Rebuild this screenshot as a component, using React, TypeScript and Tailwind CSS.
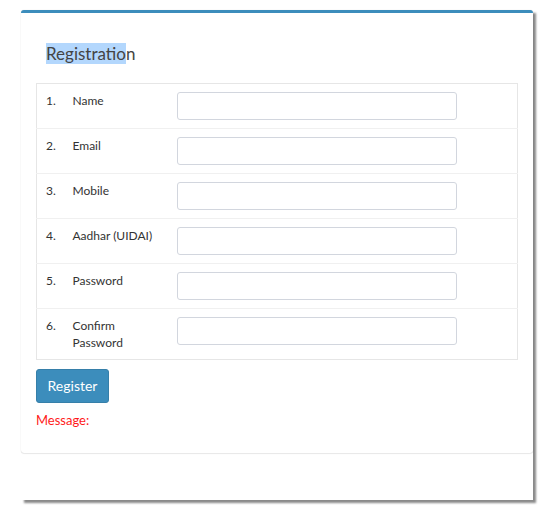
import React from "react";

const rows: { n: string; label: string; type: string }[] = [
  { n: "1.", label: "Name", type: "text" },
  { n: "2.", label: "Email", type: "email" },
  { n: "3.", label: "Mobile", type: "text" },
  { n: "4.", label: "Aadhar (UIDAI)", type: "text" },
  { n: "5.", label: "Password", type: "password" },
  { n: "6.", label: "Confirm Password", type: "password" },
];

export default function App() {
  return (
    <div className="w-[556px] h-[515px] bg-white pt-[10px] pl-[21px]" style={{ fontFamily: "Lato, 'Open Sans', sans-serif" }}>
      <div className="w-[512px] h-[490px] bg-white shadow-[3px_3px_2px_#8a8a8a]">
        <div className="h-[443px] bg-white border-t-[3px] border-[#3c8dbc] rounded-[3px] shadow-[0_0_1px_rgba(0,0,0,0.18),0_1px_1px_rgba(0,0,0,0.08)]">
          <div className="pt-[29px] pl-[25px] pb-[18px] text-[17px] leading-[23px] text-[#444]">
            <span className="bg-[#b3d7fd]">Registratio</span>n
          </div>
          <div className="px-[15px]">
            <table className="w-[482px] border-collapse border border-[#e6e6e6] text-[12px] leading-[17px] text-[#333]">
              <tbody>
                {rows.map((r, i) => (
                  <tr key={i} className={i < rows.length - 1 ? "border-b border-[#f0f0f0]" : ""}>
                    <td className="w-[28px] align-top p-[8px] pl-[9px]">{r.n}</td>
                    <td className="w-[104px] align-top p-[8px]">
                      <div className="w-[84px]">{r.label}</div>
                    </td>
                    <td className="align-top p-[8px]">
                      <input
                        type={r.type}
                        className="block w-[280px] h-[28px] border border-[#d2d6de] rounded-[3px] bg-white outline-none"
                      />
                    </td>
                  </tr>
                ))}
              </tbody>
            </table>
            <button className="mt-[9px] w-[73px] h-[34px] bg-[#3c8dbc] border border-[#367fa9] rounded-[3px] text-white text-[14px] leading-[20px]">
              Register
            </button>
            <div className="mt-[7px] text-[13px] leading-[20px] text-[#ff1a1a]">Message:</div>
          </div>
        </div>
      </div>
    </div>
  );
}
